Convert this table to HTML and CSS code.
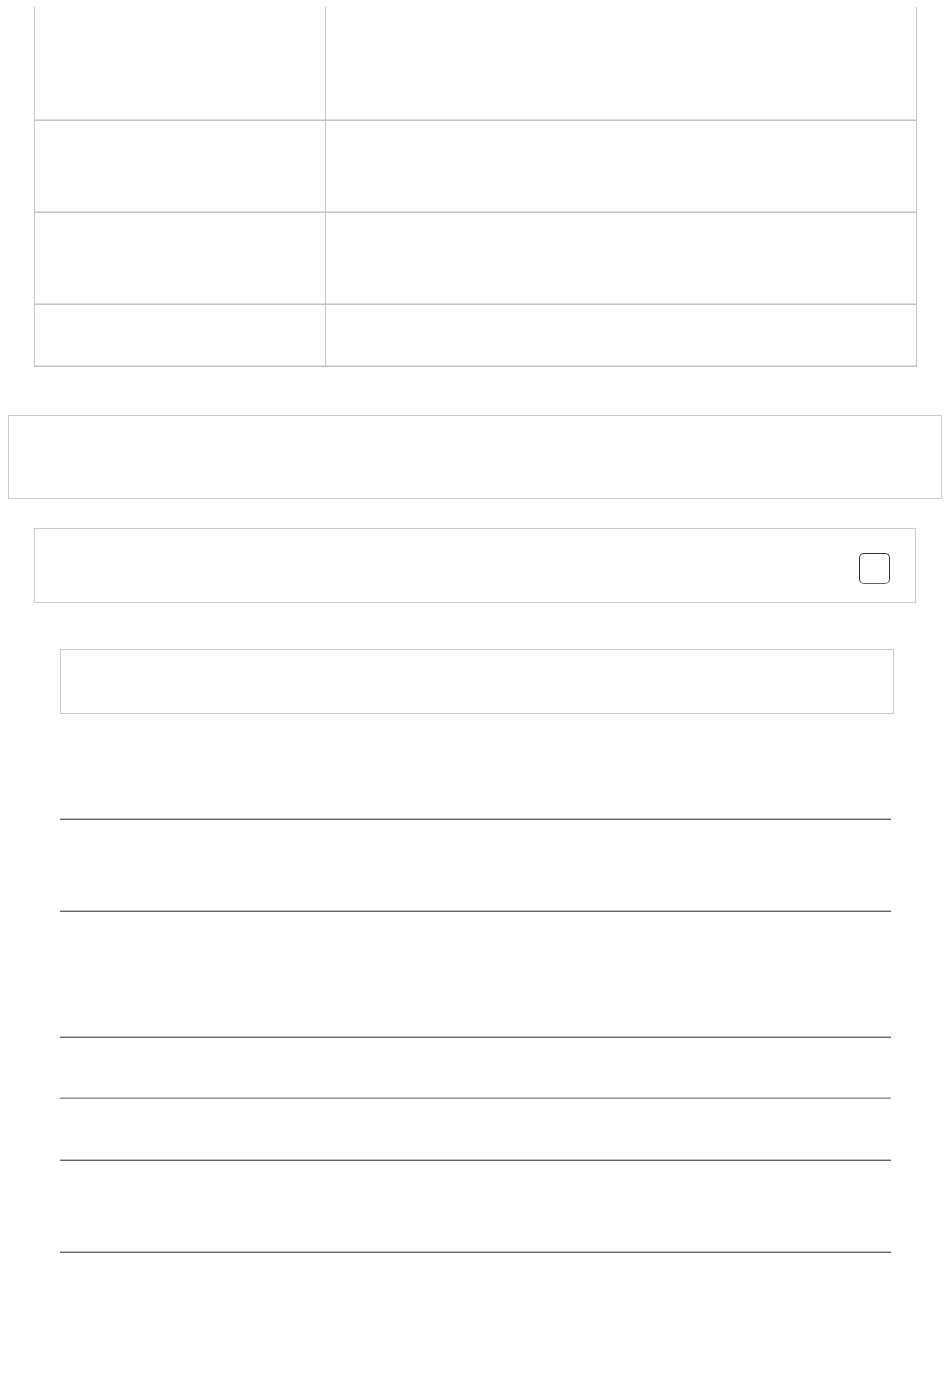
FILE: index.html
```html
<!DOCTYPE html>
<html lang="en">
<head>
  <meta charset="UTF-8" />
  <meta name="viewport" content="width=device-width, initial-scale=1.0" />
  <title>Form</title>
  <link rel="stylesheet" href="styles.css">
</head>
<body>
  <div class="grid">
    <div class="grid-row tall"><div class="cell-key"></div><div class="cell-val"></div></div>
    <div class="grid-row"><div class="cell-key"></div><div class="cell-val"></div></div>
    <div class="grid-row"><div class="cell-key"></div><div class="cell-val"></div></div>
    <div class="grid-row short"><div class="cell-key"></div><div class="cell-val"></div></div>
  </div>

  <div class="banner"></div>

  <div class="panel">
    <label class="check"><input type="checkbox"><span class="box"></span></label>
  </div>

  <div class="note"></div>

  <div class="list">
    <div class="item"></div>
    <div class="item big"></div>
    <div class="item small light"></div>
    <div class="item small"></div>
    <div class="item"></div>
  </div>
</body>
</html>
```

FILE: styles.css
```css
* { box-sizing: border-box; }
body { font-family: "Liberation Sans", Arial, sans-serif; margin: 0 8px; padding-top: 7px; padding-bottom: 126px; background: #fff; color: #333; }

.grid { margin: 0 26px 0 26px; width: 883px; border-left: 1px solid #c4c4c4; border-right: 1px solid #c4c4c4; }
.grid-row { display: flex; height: 92px; border-bottom: 1px solid #c4c4c4; box-shadow: inset 0 -1px 0 #e0e0e0; }
.grid-row.tall { height: 114px; }
.grid-row.short { height: 62px; }
.cell-key { width: 291px; border-right: 1px solid #c4c4c4; }
.cell-val { flex: 1; }

.banner { margin-top: 48px; height: 84px; border: 1px solid #cccccc; }

.panel { margin: 29px 26px 0 26px; height: 75px; border: 1px solid #cccccc; display: flex; align-items: center; justify-content: flex-end; padding: 6px 25px 0 0; }
.check input { display: none; }
.check .box { display: block; width: 31px; height: 31px; border: 1.5px solid #333; border-bottom-color: #666; border-radius: 5px; background: #fff; }

.note { margin: 46px 48px 0 52px; height: 65px; border: 1px solid #c8c8c8; }

.list { margin: 105px 51px 0 52px; border-top: 1px solid #666; box-shadow: 0 -1px 0 #c0c0c0; }
.item { height: 92px; border-bottom: 1px solid #666; box-shadow: inset 0 -1px 0 #c0c0c0; }
.item.big { height: 126px; }
.item.small { height: 61px; }
.item.light { border-bottom-color: #999; }
.item.small + .item.small { height: 62px; }
```
